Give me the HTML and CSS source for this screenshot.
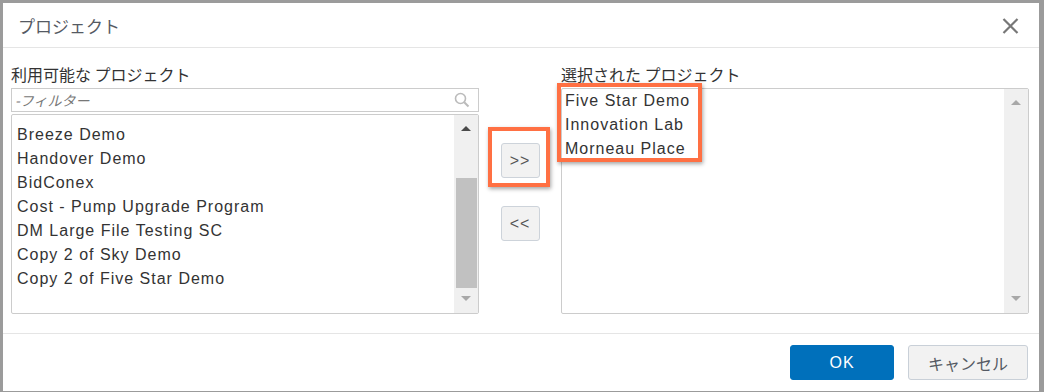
FILE: index.html
```html
<!DOCTYPE html>
<html lang="ja">
<head>
  <meta charset="UTF-8">
  <title>プロジェクト</title>
  <link rel="stylesheet" href="styles.css">
</head>
<body>
  <div class="dialog">
    <!-- Header -->
    <div class="dialog-header">
      <span class="dialog-title">プロジェクト</span>
      <button class="close-btn" aria-label="close">
        <svg width="17" height="16" viewBox="0 0 17 16">
          <path d="M1.5 1 L15.5 15 M15.5 1 L1.5 15" stroke="#777" stroke-width="2.2" fill="none"/>
        </svg>
      </button>
    </div>

    <!-- Body: two lists with mover buttons -->
    <div class="dialog-body">
      <div class="column">
        <div class="col-label">利用可能な プロジェクト</div>
        <div class="filter">
          <span class="placeholder">-フィルター</span>
          <svg class="search-icon" width="16" height="16" viewBox="0 0 16 16">
            <circle cx="6.5" cy="6.5" r="5" stroke="#bbb" stroke-width="1.6" fill="none"/>
            <path d="M10.2 10.2 L14.5 14.5" stroke="#bbb" stroke-width="2" fill="none"/>
          </svg>
        </div>
        <div class="list list-available">
          <ul class="items">
            <li>Breeze Demo</li>
            <li>Handover Demo</li>
            <li>BidConex</li>
            <li>Cost - Pump Upgrade Program</li>
            <li>DM Large File Testing SC</li>
            <li>Copy 2 of Sky Demo</li>
            <li>Copy 2 of Five Star Demo</li>
          </ul>
          <div class="scrollbar">
            <div class="sb-up"><span class="arrow-up dark"></span></div>
            <div class="sb-track"><div class="sb-thumb"></div></div>
            <div class="sb-down"><span class="arrow-down"></span></div>
          </div>
        </div>
      </div>

      <div class="mover">
        <button class="move-btn">&gt;&gt;<span class="mark mark-btn"></span></button>
        <button class="move-btn">&lt;&lt;</button>
      </div>

      <div class="column">
        <div class="col-label">選択された プロジェクト</div>
        <div class="list list-selected">
          <ul class="items">
            <li>Five Star Demo</li>
            <li>Innovation Lab</li>
            <li>Morneau Place</li>
          </ul>
          <div class="scrollbar">
            <div class="sb-up"><span class="arrow-up"></span></div>
            <div class="sb-track"></div>
            <div class="sb-down"><span class="arrow-down"></span></div>
          </div>
          <span class="mark mark-list"></span>
        </div>
      </div>
    </div>

    <!-- Footer -->
    <div class="dialog-footer">
      <button class="btn btn-primary">OK</button>
      <button class="btn btn-default">キャンセル</button>
    </div>
  </div>
</body>
</html>
```

FILE: styles.css
```css
* {
  margin: 0;
  padding: 0;
  box-sizing: border-box;
}
body {
  background: #9b9b9b;
  font-family: "Liberation Sans", "Noto Sans CJK JP", sans-serif;
  color: #333;
}
.dialog {
  margin: 3px 5px 0 3px;
  height: 388px;
  background: #fff;
  display: flex;
  flex-direction: column;
}
.dialog-header {
  height: 45px;
  border-bottom: 1px solid #e5e5e5;
  display: flex;
  align-items: center;
  justify-content: space-between;
  padding: 0 20px 0 15px;
}
.dialog-title {
  font-family: "Noto Sans CJK JP", sans-serif;
  font-size: 17px;
  color: #555a63;
}
.close-btn {
  border: none;
  background: none;
  display: flex;
  margin-top: 2px;
}
.dialog-body {
  height: 285px;
  display: flex;
  padding: 16px 10px 19px 8px;
}
.column {
  width: 468px;
  display: flex;
  flex-direction: column;
}
.col-label {
  font-family: "Noto Sans CJK JP", sans-serif;
  font-size: 16px;
  line-height: 20px;
  height: 20px;
  margin-bottom: 4px;
  color: #333;
}
.filter {
  height: 24px;
  border: 1px solid #ccc;
  margin-bottom: 2px;
  display: flex;
  align-items: center;
  justify-content: space-between;
  padding: 0 8px 0 3px;
}
.placeholder {
  font-family: "Noto Sans CJK JP", sans-serif;
  font-style: italic;
  font-size: 14px;
  color: #777;
}
.search-icon {
  display: block;
}
.list {
  position: relative;
  border: 1px solid #ccc;
  border-radius: 2px;
  display: flex;
}
.list-available {
  height: 200px;
}
.list-selected {
  height: 226px;
}
.items {
  list-style: none;
  flex: 1;
  font-size: 16px;
  letter-spacing: 1px;
  line-height: 24px;
  color: #333;
}
.list-available .items {
  padding: 8px 0 0 5px;
}
.list-selected .items {
  padding: 0 0 0 3px;
}
.scrollbar {
  width: 24px;
  background: #f0f0f0;
  display: flex;
  flex-direction: column;
}
.sb-up {
  height: 26px;
  display: flex;
  align-items: center;
  justify-content: center;
}
.sb-track {
  flex: 1;
  padding: 37px 1px 0 2px;
}
.sb-thumb {
  height: 110px;
  background: #c1c1c1;
}
.sb-down {
  height: 24px;
  display: flex;
  justify-content: center;
  padding-top: 7px;
}
.arrow-up {
  width: 0;
  height: 0;
  border-left: 5px solid transparent;
  border-right: 5px solid transparent;
  border-bottom: 5px solid #a8a8a8;
}
.arrow-up.dark {
  border-bottom-color: #4a4a4a;
}
.arrow-down {
  width: 0;
  height: 0;
  border-left: 5px solid transparent;
  border-right: 5px solid transparent;
  border-top: 5px solid #a8a8a8;
}
.mover {
  width: 82px;
  display: flex;
  flex-direction: column;
  align-items: center;
  padding-top: 79px;
  gap: 28px;
}
.move-btn {
  position: relative;
  width: 39px;
  height: 35px;
  border: 1px solid #cdd3da;
  border-radius: 3px;
  background: #f2f2f2;
  font-family: "Liberation Sans", sans-serif;
  font-size: 16px;
  letter-spacing: 1px;
  color: #555;
}
.mark {
  position: absolute;
  border: 4px solid #ff7043;
  box-shadow: 1px 2px 4px rgba(0, 0, 0, 0.35);
  pointer-events: none;
}
.mark-btn {
  left: -14px;
  top: -17px;
  width: 62px;
  height: 60px;
}
.mark-list {
  left: -5px;
  top: -6px;
  width: 145px;
  height: 79px;
}
.dialog-footer {
  flex: 1;
  border-top: 1px solid #e5e5e5;
  display: flex;
  justify-content: flex-end;
  align-items: flex-start;
  gap: 14px;
  padding: 11px 11px 0 0;
}
.btn {
  height: 35px;
  border-radius: 3px;
  font-family: "Liberation Sans", "Noto Sans CJK JP", sans-serif;
  font-size: 16px;
}
.btn-primary {
  width: 104px;
  border: 1px solid #0070bb;
  background: #0070bb;
  color: #fff;
  letter-spacing: 1px;
}
.btn-default {
  width: 120px;
  border: 1px solid #c9d0d8;
  background: #f2f2f2;
  color: #555a63;
}
```
